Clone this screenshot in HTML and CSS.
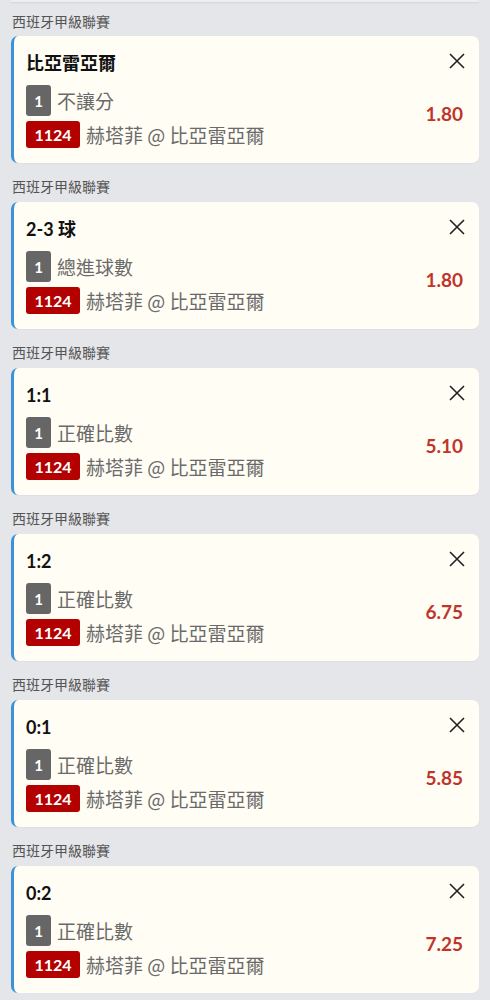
FILE: index.html
```html
<!DOCTYPE html>
<html lang="zh-Hant">
<head>
<meta charset="utf-8">
<link rel="stylesheet" href="styles.css">
</head>
<body>
<div class="topbar"></div>
<div class="list">
  <section class="group">
    <div class="league">西班牙甲級聯賽</div>
    <div class="card">
      <div class="main">
        <div class="title">比亞雷亞爾</div>
        <div class="row"><span class="badge gray">1</span><span class="txt">不讓分</span></div>
        <div class="row"><span class="badge red">1124</span><span class="txt">赫塔菲 @ 比亞雷亞爾</span></div>
      </div>
      <div class="side">
        <svg class="close" viewBox="0 0 16 16"><path d="M1 1L15 15M15 1L1 15"/></svg>
        <div class="odds">1.80</div>
      </div>
    </div>
  </section>
  <section class="group">
    <div class="league">西班牙甲級聯賽</div>
    <div class="card">
      <div class="main">
        <div class="title">2-3 球</div>
        <div class="row"><span class="badge gray">1</span><span class="txt">總進球數</span></div>
        <div class="row"><span class="badge red">1124</span><span class="txt">赫塔菲 @ 比亞雷亞爾</span></div>
      </div>
      <div class="side">
        <svg class="close" viewBox="0 0 16 16"><path d="M1 1L15 15M15 1L1 15"/></svg>
        <div class="odds">1.80</div>
      </div>
    </div>
  </section>
  <section class="group">
    <div class="league">西班牙甲級聯賽</div>
    <div class="card">
      <div class="main">
        <div class="title">1:1</div>
        <div class="row"><span class="badge gray">1</span><span class="txt">正確比數</span></div>
        <div class="row"><span class="badge red">1124</span><span class="txt">赫塔菲 @ 比亞雷亞爾</span></div>
      </div>
      <div class="side">
        <svg class="close" viewBox="0 0 16 16"><path d="M1 1L15 15M15 1L1 15"/></svg>
        <div class="odds">5.10</div>
      </div>
    </div>
  </section>
  <section class="group">
    <div class="league">西班牙甲級聯賽</div>
    <div class="card">
      <div class="main">
        <div class="title">1:2</div>
        <div class="row"><span class="badge gray">1</span><span class="txt">正確比數</span></div>
        <div class="row"><span class="badge red">1124</span><span class="txt">赫塔菲 @ 比亞雷亞爾</span></div>
      </div>
      <div class="side">
        <svg class="close" viewBox="0 0 16 16"><path d="M1 1L15 15M15 1L1 15"/></svg>
        <div class="odds">6.75</div>
      </div>
    </div>
  </section>
  <section class="group">
    <div class="league">西班牙甲級聯賽</div>
    <div class="card">
      <div class="main">
        <div class="title">0:1</div>
        <div class="row"><span class="badge gray">1</span><span class="txt">正確比數</span></div>
        <div class="row"><span class="badge red">1124</span><span class="txt">赫塔菲 @ 比亞雷亞爾</span></div>
      </div>
      <div class="side">
        <svg class="close" viewBox="0 0 16 16"><path d="M1 1L15 15M15 1L1 15"/></svg>
        <div class="odds">5.85</div>
      </div>
    </div>
  </section>
  <section class="group">
    <div class="league">西班牙甲級聯賽</div>
    <div class="card">
      <div class="main">
        <div class="title">0:2</div>
        <div class="row"><span class="badge gray">1</span><span class="txt">正確比數</span></div>
        <div class="row"><span class="badge red">1124</span><span class="txt">赫塔菲 @ 比亞雷亞爾</span></div>
      </div>
      <div class="side">
        <svg class="close" viewBox="0 0 16 16"><path d="M1 1L15 15M15 1L1 15"/></svg>
        <div class="odds">7.25</div>
      </div>
    </div>
  </section>
</div>
</body>
</html>
```
FILE: styles.css
```css
* { box-sizing: border-box; }
html, body { margin: 0; padding: 0; }
body {
  background: #e5e6e9;
  font-family: Lato, "Noto Sans CJK TC", sans-serif;
  width: 490px;
  overflow: hidden;
}
.topbar {
  height: 2px;
  margin: 0 11px;
  background: #eeeef0;
  box-shadow: 0 1px 2px rgba(0,0,0,0.08);
}
.list {
  padding: 0 11px;
}
.group {
  display: flex;
  flex-direction: column;
}
.league {
  height: 34px;
  margin-top: 5px;
  padding-left: 1px;
  font-size: 14px;
  line-height: 37px;
  color: #555;
  font-family: "Noto Sans CJK TC", sans-serif;
}
.group:first-child .league {
  margin-top: 0;
  line-height: 38px;
}
.card {
  height: 127px;
  background: #fffdf4;
  border-left: 3px solid #3a93d8;
  border-radius: 7px;
  padding: 14px 16px 15px 12px;
  display: flex;
  justify-content: space-between;
  box-shadow: 0 1px 1px rgba(0,0,0,0.03);
}
.main {
  display: flex;
  flex-direction: column;
}
.title {
  font-size: 18px;
  font-weight: 700;
  line-height: 26px;
  color: #111;
  margin-bottom: 9px;
}
.row {
  display: flex;
  align-items: center;
}
.row + .row { margin-top: 5px; }
.badge {
  display: inline-flex;
  align-items: center;
  justify-content: center;
  color: #fff;
  font-weight: 700;
  border-radius: 3px;
  font-family: Lato, sans-serif;
}
.badge.gray {
  width: 25px;
  height: 31px;
  background: #666;
  font-size: 15px;
}
.badge.red {
  width: 54px;
  height: 27px;
  background: #b30000;
  font-size: 16px;
}
.txt {
  margin-left: 6px;
  font-size: 19px;
  color: #6a6a6a;
  font-family: "Noto Sans CJK TC", sans-serif;
  line-height: 26px;
}
.side {
  display: flex;
  flex-direction: column;
  align-items: flex-end;
}
.close {
  width: 16px;
  height: 16px;
  margin-top: 3px;
  margin-right: -2px;
  stroke: #222;
  stroke-width: 1.6;
  fill: none;
}
.odds {
  margin-top: 34px;
  font-size: 19px;
  font-weight: 700;
  color: #c0352b;
  line-height: 22px;
}
```
